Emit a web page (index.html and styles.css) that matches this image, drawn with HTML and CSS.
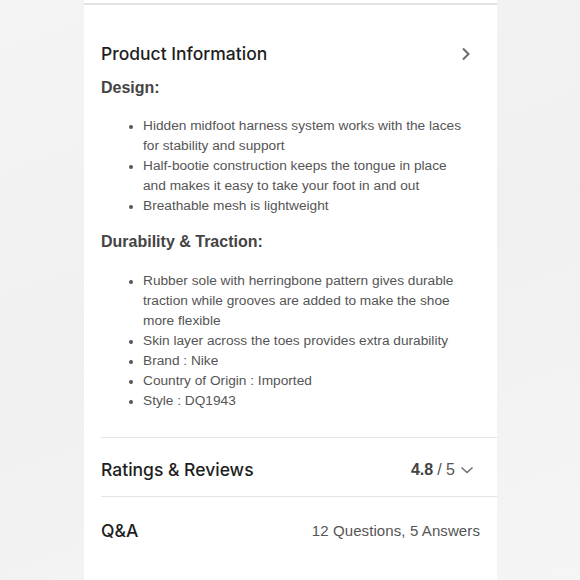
FILE: index.html
```html
<!DOCTYPE html>
<html>
<head>
<meta charset="utf-8">
<link rel="stylesheet" href="styles.css">
</head>
<body>
<div class="page">
  <div class="card">
    <div class="top-line"></div>
    <div class="info">
      <div class="info-head">
        <h2 class="title">Product Information</h2>
        <svg class="chev-right" width="10" height="14" viewBox="0 0 10 14"><path d="M2 1.5 L7.5 7 L2 12.5" fill="none" stroke="#6a6a6a" stroke-width="2"/></svg>
      </div>
      <h3 class="sub sub-design">Design:</h3>
      <ul class="list list-design">
        <li>Hidden midfoot harness system works with the laces for stability and support</li>
        <li>Half-bootie construction keeps the tongue in place and makes it easy to take your foot in and out</li>
        <li>Breathable mesh is lightweight</li>
      </ul>
      <h3 class="sub sub-dur">Durability &amp; Traction:</h3>
      <ul class="list list-dur">
        <li>Rubber sole with herringbone pattern gives durable traction while grooves are added to make the shoe more flexible</li>
        <li>Skin layer across the toes provides extra durability</li>
        <li>Brand : Nike</li>
        <li>Country of Origin : Imported</li>
        <li>Style : DQ1943</li>
      </ul>
    </div>
    <div class="row row-ratings">
      <span class="title">Ratings &amp; Reviews</span>
      <span class="rating"><b>4.8</b> / 5
        <svg class="chev-down" width="14" height="10" viewBox="0 0 14 10"><path d="M1.5 2.5 L7 7.5 L12.5 2.5" fill="none" stroke="#707070" stroke-width="1.6"/></svg>
      </span>
    </div>
    <div class="row row-qa">
      <span class="title">Q&amp;A</span>
      <span class="qa-count">12 Questions, 5 Answers</span>
    </div>
  </div>
</div>
</body>
</html>
```

FILE: styles.css
```css
html, body {
  margin: 0;
  padding: 0;
}
body {
  background: linear-gradient(160deg, #f4f4f4 0%, #f0f0f0 50%, #f5f5f5 100%);
  font-family: "Liberation Sans", Arial, sans-serif;
  width: 580px;
  height: 580px;
  overflow: hidden;
}
.page {
  display: flex;
  justify-content: flex-start;
  padding-left: 84px;
}
.card {
  width: 413px;
  height: 580px;
  background: #ffffff;
  padding-top: 3px;
  box-sizing: border-box;
}
.top-line {
  height: 2px;
  background: #e2e2e2;
}
.info {
  padding: 37px 0 0 17px;
}
.info-head {
  display: flex;
  align-items: center;
  justify-content: space-between;
  padding-right: 26px;
  height: 24px;
}
.title {
  margin: 0;
  font-family: Inter, "Liberation Sans", sans-serif;
  font-size: 17.5px;
  font-weight: 500;
  color: #1e1e1e;
  line-height: 24px;
}
.sub {
  margin: 0;
  font-size: 16px;
  font-weight: 700;
  color: #444444;
  line-height: 20px;
}
.sub-design {
  margin-top: 12px;
}
.sub-dur {
  margin-top: 16px;
}
.list {
  margin: 0;
  padding-left: 42px;
  padding-right: 30px;
  font-size: 13.7px;
  line-height: 20px;
  color: #555555;
}
.list-design {
  margin-top: 18px;
}
.list-dur {
  margin-top: 19px;
}
.list li::marker {
  font-size: 12px;
}
.row {
  margin-left: 17px;
  border-top: 1px solid #e4e4e4;
  display: flex;
  align-items: center;
  justify-content: space-between;
  height: 61px;
}
.row-ratings {
  margin-top: 26px;
  padding-top: 6px;
  height: 59px;
  box-sizing: border-box;
  padding-right: 23px;
}
.rating {
  display: flex;
  align-items: center;
  font-size: 16px;
  color: #555555;
}
.rating b {
  color: #444444;
  font-weight: 700;
  margin-right: 4px;
}
.chev-down {
  margin-left: 5px;
}
.row-qa {
  padding-right: 17px;
  padding-top: 4px;
  box-sizing: border-box;
  height: 64px;
}
.qa-count {
  font-size: 15px;
  color: #555555;
  letter-spacing: 0.1px;
}
```
